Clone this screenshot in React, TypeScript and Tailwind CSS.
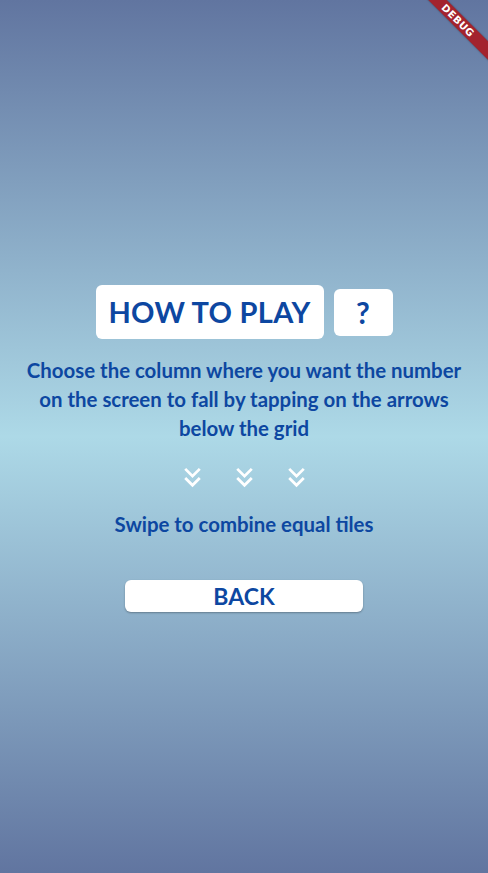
import React from "react";

function DoubleDown() {
  return (
    <svg width="33" height="33" viewBox="0 0 24 24" fill="white">
      <path d="M18 6.41L16.59 5 12 9.58 7.41 5 6 6.41l6 6z" />
      <path d="M18 13l-1.41-1.41L12 16.17l-4.59-4.58L6 13l6 6z" />
    </svg>
  );
}

export default function App() {
  const font = { fontFamily: "Lato, 'Noto Sans', sans-serif" };
  return (
    <div
      className="relative w-full h-[873px] overflow-hidden bg-[linear-gradient(to_bottom,#6175a0_0%,#add9e7_50%,#6175a0_100%)]"
      style={font}
    >
      <div className="flex flex-col items-center pt-[285px] text-[#0d47a1] font-bold">
        <div className="flex items-center gap-[10px]">
          <div className="w-[228px] h-[54px] bg-white rounded-[6px] flex items-center justify-center text-[29px] tracking-[0.3px]">
            HOW TO PLAY
          </div>
          <div className="w-[59px] h-[47px] bg-white rounded-[6px] flex items-center justify-center text-[30px]">
            ?
          </div>
        </div>
        <p className="mt-[17px] text-center text-[20.4px] leading-[29px] whitespace-nowrap">
          Choose the column where you want the number
          <br />
          on the screen to fall by tapping on the arrows
          <br />
          below the grid
        </p>
        <div className="mt-[18px] flex gap-[19px]">
          <DoubleDown />
          <DoubleDown />
          <DoubleDown />
        </div>
        <p className="mt-[16px] text-center text-[20.4px] leading-[29px]">
          Swipe to combine equal tiles
        </p>
        <div className="mt-[41px] w-[238px] h-[32px] bg-white rounded-[6px] shadow-[0_1px_2px_rgba(0,0,0,0.3)] flex items-center justify-center text-[23px]">
          BACK
        </div>
      </div>
      <div className="absolute top-[14px] right-[-30px] w-[120px] h-[13px] rotate-45 bg-[#a3232e] flex items-center justify-center shadow-[0_0_2px_rgba(0,0,0,0.4)]">
        <span className="text-white text-[10px] font-bold leading-none tracking-[0.5px]" style={{ fontFamily: "'DejaVu Sans', sans-serif" }}>
          DEBUG
        </span>
      </div>
    </div>
  );
}
